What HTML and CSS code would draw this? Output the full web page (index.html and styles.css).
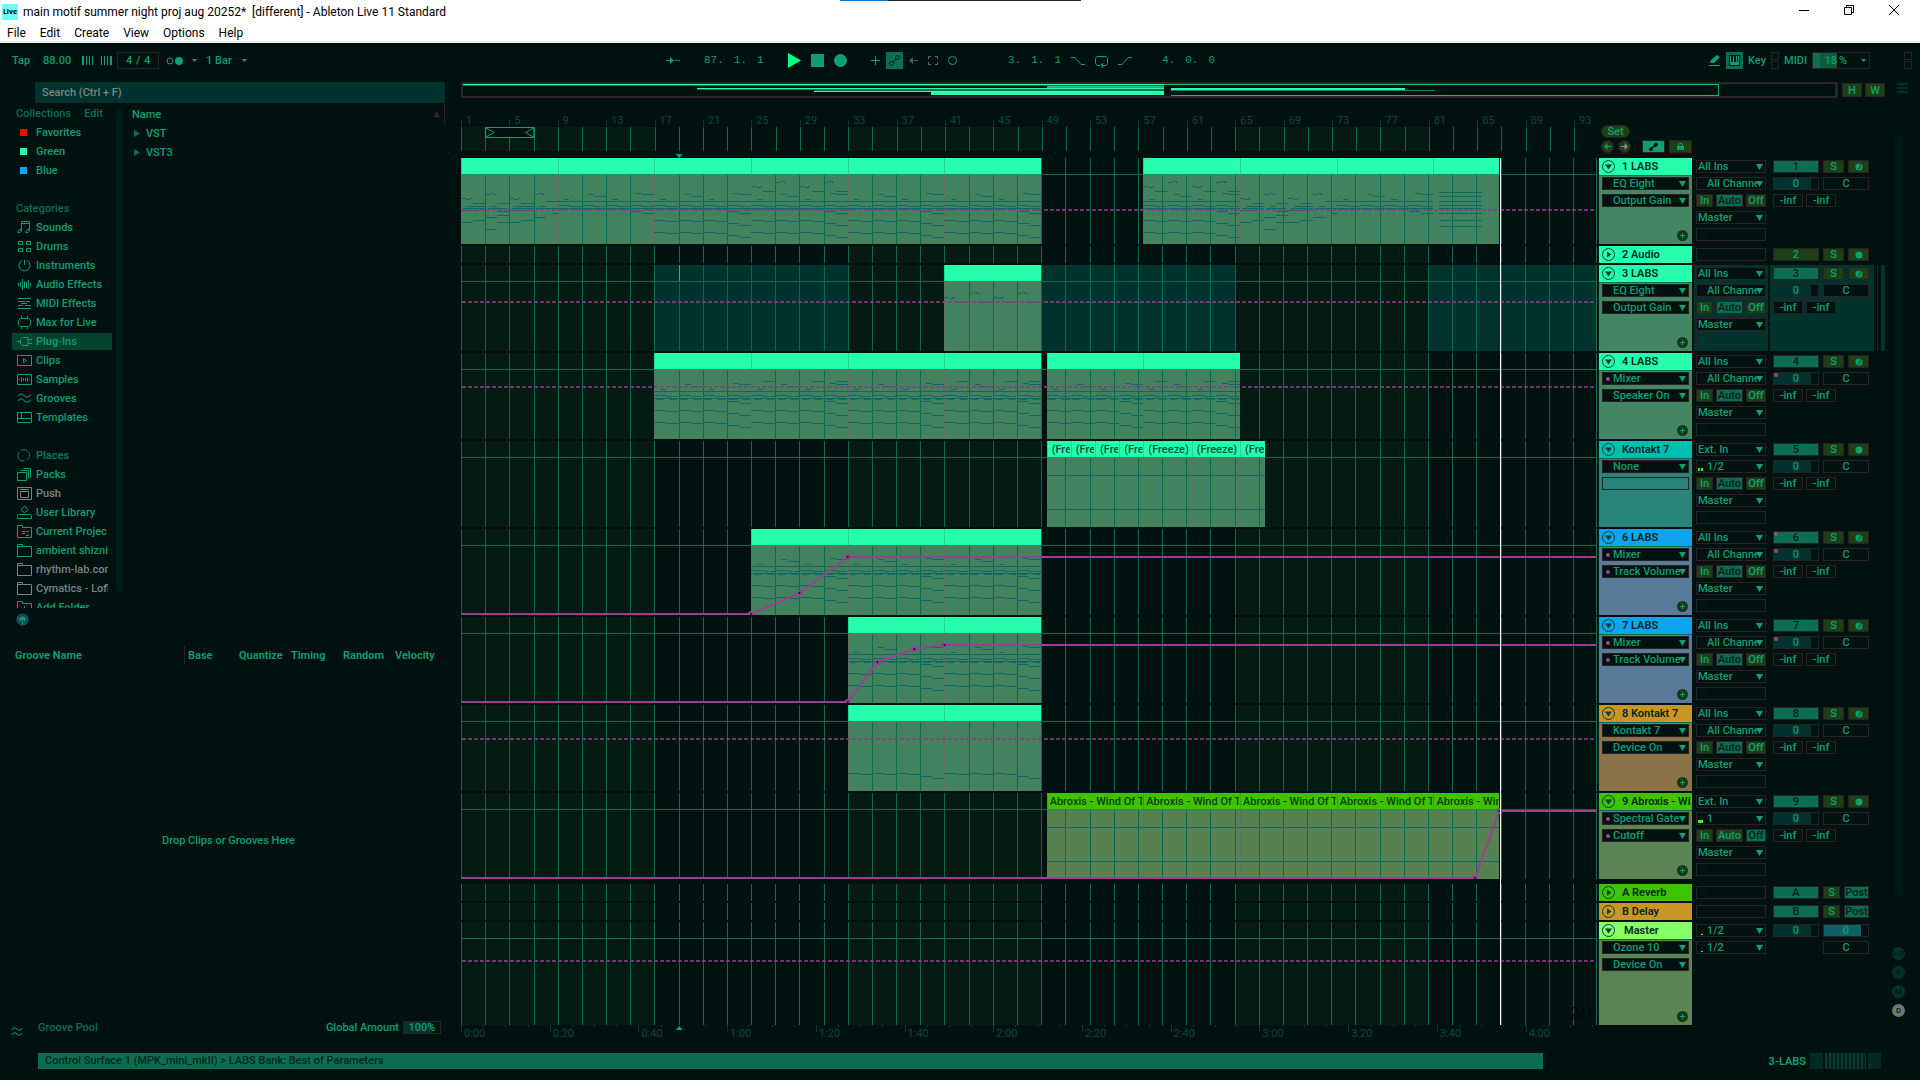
FILE: index.html
```html
<!DOCTYPE html>
<html lang="en">
<head>
<meta charset="utf-8">
<title>main motif summer night proj aug 20252* [different] - Ableton Live 11 Standard</title>
<link rel="stylesheet" href="styles.css">
</head>
<body>
<header class="window-head">
  <div class="title-row">
    <span class="live-logo">Live</span>
    <h1 class="window-title">main motif summer night proj aug 20252*&nbsp; [different] - Ableton Live 11 Standard</h1>
    <div class="window-buttons">
      <button aria-label="Minimize"><svg width="10" height="10"><path d="M0 5.500h10"/></svg></button>
      <button aria-label="Restore"><svg width="10" height="10"><path d="M.5 2.500h7v7h-7zM2.500 2.500v-2h7v7h-2"/></svg></button>
      <button aria-label="Close"><svg width="10" height="10"><path d="M0 0l10 10M10 0L0 10"/></svg></button>
    </div>
  </div>
  <nav class="menu-row">
    <button>File</button><button>Edit</button><button>Create</button><button>View</button><button>Options</button><button>Help</button>
  </nav>
</header>

<main class="app">
  <section class="toolbar" aria-label="Transport">
    <div class="tool-group tempo">
      <button class="plain tap">Tap</button>
      <span class="bpm">88.00</span>
      <svg class="nudge" width="11" height="9"><path d="M0 0h2v9H0zM4 0h1v9H4zM7 0h1v9H7zM10 0h1v9h-1z"/></svg>
      <svg class="nudge" width="11" height="9"><path d="M0 0h1v9H0zM3 0h1v9H3zM6 0h1v9H6zM9 0h2v9H9z"/></svg>
      <span class="signature">4 / 4</span>
      <button class="plain metro" aria-label="Metronome"><svg width="17" height="8"><circle cx="4" cy="4" r="3" fill="none" stroke="#109f71"/><circle cx="13" cy="4" r="4"/></svg></button>
      <i class="caret"></i>
      <span class="quant">1 Bar</span>
      <i class="caret"></i>
    </div>
    <div class="tool-group transport">
      <svg width="14" height="9"><path d="M0 4h4V1l4 3.500L4 8V5H0zM9 4h2v1H9zM12 4h2v1h-2z"/></svg>
      <span class="position"><b>87.</b><b>1.</b><b>1</b></span>
      <button class="plain" aria-label="Play"><svg width="13" height="15"><path fill="#00ff88" d="M0 0l13 7.500L0 15z"/></svg></button>
      <button class="plain" aria-label="Stop"><svg width="13" height="13"><path d="M0 0h13v13H0z"/></svg></button>
      <button class="plain rec" aria-label="Record"><svg width="13" height="13"><circle cx="6.500" cy="6.500" r="6.500"/></svg></button>
      <button class="plain" aria-label="Overdub"><svg width="9" height="9"><path d="M4 0h1v9H4zM0 4h9v1H0z"/></svg></button>
      <button class="plain auto-arm" aria-label="Automation arm"><svg width="17" height="17"><rect width="17" height="17" fill="#0c6e50"/><g fill="none" stroke="#01221a"><circle cx="5.500" cy="11.500" r="2"/><circle cx="11.500" cy="5.500" r="2"/><path d="M7 10l3-3"/></g></svg></button>
      <button class="plain" aria-label="Re-enable automation"><svg width="9" height="7"><path fill="#5b5353" d="M0 3.500L4 0v3h5v1H4v3z"/></svg></button>
      <button class="plain" aria-label="Capture"><svg width="10" height="9"><path fill="none" stroke="#6f6565" d="M.5 3V.5H3M7 .5h2.500V3M9.500 6v2.500H7M3 8.500H.5V6"/></svg></button>
      <button class="plain session-rec" aria-label="Session record"><svg width="9" height="9"><circle cx="4.500" cy="4.500" r="4" fill="none" stroke="#109f71"/></svg></button>
      <span class="position"><b>3.</b><b>1.</b><b>1</b></span>
      <svg class="line-icon" width="14" height="8"><path d="M0 .5h4l6 7h4"/></svg>
      <svg class="line-icon loop" width="13" height="12"><path d="M5 9.500H2l-1.500-2v-5L2 .5h9l1.500 2v5l-1.500 2H8M7.500 7v4.500M8 7L6 9.500 8 11.500"/></svg>
      <svg class="line-icon" width="14" height="8"><path d="M0 7.500h4l6-7h4"/></svg>
      <span class="position last"><b>4.</b><b>0.</b><b>0</b></span>
    </div>
    <div class="tool-group status">
      <svg width="12" height="11"><path d="M0 10h11v1H0zM1 8l1-3 6-5 3 2-6 6z"/></svg>
      <svg width="17" height="17"><rect width="17" height="17" fill="#0c6e50"/><path fill="#01130f" d="M3 3h11v11H3z"/><path fill="#109f71" d="M4 4h1v9H4zM12 4h1v9h-1zM5 10h7v3H5zM7 4h1v6H7zM10 4h1v6h-1z"/></svg>
      <span class="key">Key</span>
      <span class="lamps"><i></i><i></i></span>
      <span>MIDI</span>
      <span class="cpu"><b>18</b>%<i class="caret"></i></span>
      <span class="lamps end"><i></i><i></i></span>
    </div>
  </section>

  <div class="workspace">
    <aside class="left">
      <div class="browser">
        <input class="search" type="search" placeholder="Search (Ctrl + F)" aria-label="Search">
        <div class="browser-cols">
          <ul class="side-list" id="side-list"></ul>
          <div class="side-scroll"></div>
          <div class="files">
            <div class="files-head"><span>Name</span><i class="sort"></i></div>
            <div class="file"><i></i>VST</div>
            <div class="file"><i></i>VST3</div>
          </div>
        </div>
        <button class="plain preview" aria-label="Preview"><svg width="13" height="13"><circle cx="6.500" cy="6.500" r="5.500" fill="#0b4a4c" stroke="#14696b"/><path d="M3 7a3.500 3.500 0 0 1 7 0l-2 2V7H7v4H6V7H5v2z" fill="#1a8d86"/></svg></button>
      </div>
      <div class="groove">
        <div class="groove-head"><span>Groove Name</span><span>Base</span><span>Quantize</span><span>Timing</span><span>Random</span><span>Velocity</span></div>
        <p class="drop-hint">Drop Clips or Grooves Here</p>
        <div class="groove-foot">
          <svg class="line-icon" width="12" height="9"><path d="M.5 3l2-2h2l3 2h2l2-2M.5 8l2-2h2l3 2h2l2-2"/></svg>
          <span class="pool">Groove Pool</span><span>Global Amount</span><span class="amount">100%</span>
        </div>
      </div>
    </aside>

    <section class="arrange">
      <div class="overview-row">
        <svg class="overview" id="overview"></svg>
        <button class="btn hw">H</button><button class="btn hw">W</button>
        <svg class="burger" width="11" height="11"><path d="M0 0h11v2H0zM0 4h11v2H0zM0 8h11v2H0z"/></svg>
      </div>
      <div class="arrange-body">
        <div class="lanes">
          <svg class="ruler" id="ruler"></svg>
          <div class="lane-stack" id="lanes"><span class="playhead"></span><span class="grid-size">2/1</span></div>
          <svg class="time-ruler" id="time-ruler"></svg>
        </div>
        <div class="strips">
          <div class="set-box">
            <button class="btn set">Set</button>
            <div class="set-row">
              <button class="round" aria-label="Previous locator"><svg width="7" height="7"><path d="M0 3.500L3.500 0v3H7v1H3.500v3z" fill="#109f71"/></svg></button>
              <button class="round" aria-label="Next locator"><svg width="7" height="7"><path d="M7 3.500L3.500 0v3H0v1h3.500v3z" fill="#8c8c84"/></svg></button>
              <button class="btn wide on" aria-label="Automation mode"><svg width="9" height="8"><path d="M0 6l2-2h1l2-2V1l1-1h2l1 1v1L7 4H5L4 5v1L3 8H1L0 7z" fill="#01130f"/></svg></button>
              <button class="btn wide" aria-label="Lock envelopes"><svg width="7" height="7"><path d="M0 3h7v4H0z" fill="#109f71"/><path d="M1.500 3V2l1-1.500h2l1 1.500v1" fill="none" stroke="#109f71"/></svg></button>
            </div>
          </div>
          <div id="strips" class="strip-stack"></div>
        </div>
        <div class="rail">
          <div class="rail-scroll"></div>
          <div class="rail-buttons"><button>I-O</button><button>R</button><button>M</button><button class="lit">D</button></div>
        </div>
      </div>
    </section>
  </div>

  <footer class="status-row">
    <p class="status-text">Control Surface 1 (MPK_mini_mkII) &gt; LABS Bank: Best of Parameters</p>
    <span class="device-name">3-LABS</span>
    <span class="device small"></span><span class="device"></span><span class="device small"></span>
  </footer>
</main>
<div class="taskbar"><i></i><i></i></div>
<script src="app.js"></script>
</body>
</html>
```
FILE: styles.css
```css
:root {
  --bg: #001210;
  --band: #051a12;
  --select: #00322e;
  --green: #109f71;
  --mid: #0c6e50;
  --line: #0a6b4f;
  --frame: #282222;
  --olive: #1e4016;
}
* { box-sizing: border-box; }
body {
  margin: 0;
  min-height: 100vh;
  display: flex;
  flex-direction: column;
  background: var(--bg);
  color: var(--green);
  font: 500 11px/13px Roboto, "Liberation Sans", sans-serif;
  overflow: hidden;
}
button, input, select { font: inherit; color: inherit; margin: 0; padding: 0; border: 0; background: none; border-radius: 0; }
svg { display: block; flex: none; fill: var(--green); }
svg svg { fill: inherit; }
b { font-weight: inherit; }
i { font-style: normal; }
.plain { display: flex; align-items: center; }

/* window frame */
.window-head { position: relative; background: #fff; color: #000; border-bottom: 2px solid #edf0ee; font: 400 12px/16px Roboto, "Noto Sans", sans-serif; }
.window-head::before { content: ""; position: absolute; top: 0; left: 840px; width: 241px; height: 1px; background: linear-gradient(90deg, #0078d7 48px, #222 48px); }
.title-row { display: flex; align-items: center; height: 24px; padding-left: 2px; }
.live-logo { width: 16px; height: 16px; background: #71fff4; font: 700 7px/16px "Open Sans", sans-serif; text-align: center; }
.window-title { margin: 0 0 0 5px; font: inherit; }
.window-buttons { margin-left: auto; display: flex; gap: 35px; padding: 0 21px 4px 0; }
.window-buttons svg { fill: none; stroke: #000; }
.menu-row { display: flex; gap: 14px; height: 17px; padding-left: 7px; }

.app { flex: 1; display: flex; flex-direction: column; }

/* transport bar */
.toolbar { display: grid; grid-template-columns: 666px 1fr 216px; height: 35px; }
.tool-group { display: flex; align-items: center; }
.tempo { padding-left: 12px; }
.bpm { margin: 0 12px 0 13px; width: 27px; }
.nudge { margin-right: 8px; }
.signature { margin: 0 10px 0 -3px; width: 42px; height: 17px; border: 1px solid var(--frame); line-height: 15px; text-align: center; word-spacing: 1px; }
.caret { width: 5px; height: 3px; background: var(--green); clip-path: polygon(0 0, 100% 0, 50% 100%); }
.metro { margin-left: -3px; margin-right: 9px; }
.quant { margin: 0 10px 0 9px; }
.transport { gap: 10px; }
.position { display: flex; gap: 10px; width: 61px; margin-left: 14px; margin-right: 13px; font: 400 11px/13px "Liberation Mono", monospace; }
.rec { margin-right: 14px; }
.auto-arm { margin: 0 -4px; }
.session-rec { margin-right: 41px; }
.session-rec ~ .position:not(.last) { margin: 0; width: 53px; }
.position.last { margin-left: 20px; }
.line-icon { fill: none; stroke: var(--green); }
.loop { margin-top: 3px; }
.status { gap: 5px; padding-left: 5px; }
.lamps { display: grid; gap: 1px; }
.lamps i { width: 8px; height: 8px; border: 1px solid var(--frame); }
.cpu { display: flex; align-items: center; width: 58px; height: 17px; border: 1px solid var(--frame); gap: 2px; }
.cpu b { width: 24px; line-height: 15px; text-align: right; background: linear-gradient(90deg, #0c6e50 7px, #0a5b3c 7px); }
.cpu .caret { margin-left: auto; margin-right: 3px; }
.lamps.end { margin-left: auto; margin-right: 8px; }

.workspace { flex: 1; display: grid; grid-template-columns: 461px minmax(0, 1fr); }

/* browser */
.left { display: flex; flex-direction: column; padding-top: 4px; }
.browser { display: flex; flex-direction: column; height: 557px; }
.search { flex: none; width: 410px; height: 21px; margin-left: 35px; padding-left: 7px; background: var(--select); outline: 0; }
.search::placeholder { color: #758780; opacity: 1; }
.browser-cols { display: grid; grid-template-columns: 116px 7px 1fr; height: 504px; margin-top: 1px; }
.side-list { margin: 0; padding: 0 0 0 12px; list-style: none; overflow: hidden; }
.side-list li { display: flex; align-items: center; gap: 4px; width: 100px; height: 19px; padding-left: 5px; white-space: nowrap; overflow: hidden; border-bottom: 1px solid var(--bg); border-top: 1px solid var(--bg); }
.side-list span { width: 72px; overflow: hidden; line-height: 17px; }
.side-list svg { width: 15px; height: 13px; fill: none; stroke: currentColor; }
.side-list .head { color: var(--mid); padding-left: 4px; }
.side-list .head span { flex: none; width: auto; margin-right: 9px; }
.side-list .head span:last-child { margin: 0; }
.side-list .picked { background: #06432f; }
.side-list .grey { color: #7d8480; }
.side-list .dim { color: #0c7d5b; }
.swatch { width: 7px; height: 7px; margin: 0 5px 0 3px; }
.side-scroll { margin: 5px 0 16px; border-radius: 4px; background: #001a16; }
.files { padding-left: 9px; }
.files-head { display: flex; align-items: center; width: 313px; height: 20px; padding-right: 4px; border-right: 1px solid var(--frame); }
.sort { margin-left: auto; width: 7px; height: 7px; background: #2b2727; clip-path: polygon(50% 0, 100% 100%, 0 100%); }
.file { display: flex; align-items: center; gap: 6px; height: 19px; padding-left: 2px; }
.file i { width: 6px; height: 7px; background: var(--mid); clip-path: polygon(0 0, 100% 50%, 0 100%); }
.preview { margin: 5px 0 0 16px; }

/* groove pool */
.groove { flex: 1; display: flex; flex-direction: column; }
.groove-head { display: grid; grid-template-columns: 169px 52px 52px 52px 52px 1fr; height: 20px; padding-left: 15px; margin-top: 6px; align-items: center; font-weight: 600; }
.groove-head span:nth-child(n+2) { padding-left: 3px; line-height: 19px; }
.groove-head span:nth-child(2) { border-left: 1px solid var(--frame); }
.drop-hint { flex: 1; display: grid; place-items: center; margin: 0; padding: 0 4px 2px 0; }
.groove-foot { display: flex; align-items: center; height: 19px; padding-left: 11px; margin-bottom: 6px; }
.groove-foot svg { margin-top: 8px; }
.pool { margin: 0 auto 0 15px; color: var(--mid); }
.amount { width: 38px; height: 13px; margin: 0 20px 0 4px; border: 1px solid var(--frame); background: linear-gradient(90deg, var(--select) 28px, transparent 28px); line-height: 11px; text-align: center; }

/* arrangement */
.arrange { display: flex; flex-direction: column; padding-top: 4px; }
.overview-row { display: flex; align-items: center; height: 16px; }
.overview { flex: 1; height: 16px; border: 2px solid #2b2525; border-right-width: 3px; }
.btn { display: grid; place-items: center; border: 1px solid var(--frame); background: var(--olive); line-height: 11px; white-space: nowrap; overflow: hidden; }
.hw { width: 20px; height: 14px; margin-left: 4px; }
.hw + .hw { margin-left: 3px; }
.burger { margin: -4px 12px 0 12px; fill: #00302c; }
.arrange-body { flex: 1; display: grid; grid-template-columns: minmax(0, 1fr) 286px 33px; gap: 0 2px; padding-top: 6px; }
.lanes { display: flex; flex-direction: column; }
.ruler { width: 100%; height: 54px; font-size: 11px; font-weight: 400; }
.lane-stack, .strip-stack { display: flex; flex-direction: column; gap: 2px; }
.lane-stack { position: relative; }
.lane { width: 100%; height: 86px; border-right: 1px solid var(--line); background: var(--bg); }
.short { height: 17px; }
.tall { height: 103px; }
.first-return { margin-top: 3px; }
.playhead { position: absolute; z-index: 2; top: 0; bottom: 0; left: 91.5%; width: 1px; background: #fff; }
.grid-size { position: absolute; z-index: 1; right: 3px; bottom: 1px; color: #000806; font: 400 16px/20px Roboto, sans-serif; }
.time-ruler { width: 100%; height: 18px; fill: #0b4533; font-weight: 400; }

.set-box { height: 54px; padding: 21px 0 0 2px; }
.set { width: 29px; height: 13px; border-radius: 7px; }
.set-row { display: flex; align-items: center; margin-top: 2px; }
.round { display: grid; place-items: center; width: 13px; height: 13px; margin-right: 4px; border: 1px solid var(--frame); border-radius: 50%; background: var(--olive); }
.wide { width: 23px; height: 13px; margin-left: 4px; }
.round + .wide { margin-left: 7px; }
.set-row .on { background: var(--green); }

.strip { display: grid; grid-template-columns: 93px 74px 115px; gap: 2px; height: 86px; }
.strip.short { height: 17px; }
.strip.tall { height: 103px; }
.name-col { background: var(--body); position: relative; }
.name { display: flex; align-items: center; gap: 7px; height: 17px; padding-left: 3px; background: var(--head); color: #01281d; font-weight: 600; white-space: nowrap; overflow: hidden; }
.strip:not(.short) .name { height: 18px; border-bottom: 1px solid var(--mid); }
.name svg { fill: #033f33; }
.strip.center .name { gap: 9px; }
.dd { position: relative; display: block; height: 13px; border: 1px solid var(--frame); background: var(--bg); }
.dd select { display: block; width: 100%; height: 11px; padding: 0 8px 0 1px; appearance: none; line-height: 11px; outline: 0; }
.dd.in select { padding-left: 10px; }
.dd::after { content: ""; position: absolute; right: 2px; top: 3px; width: 7px; height: 6px; background: var(--green); clip-path: polygon(0 0, 100% 0, 50% 100%); }
.dd.auto::before, .dot::before { content: ""; position: absolute; left: 3px; top: 4px; width: 4px; height: 4px; border-radius: 50%; background: #9d4798; }
.dd.blank { background: none; }
.dd.blank::after { display: none; }
.dd.meter::before { content: ""; position: absolute; left: 1px; bottom: 1px; width: 5px; height: 3px; background: #2dff2d; }
.dd.stereo::before { background: linear-gradient(90deg, #2dff2d 2px, transparent 2px 3px, #2dff2d 3px); }
.dd.quiet::before { left: 4px; width: 2px; height: 1px; }
.devices { display: grid; gap: 4px; padding: 1px 3px 0; }
.add { position: absolute; right: 4px; bottom: 3px; display: grid; place-items: center; width: 11px; height: 11px; border-radius: 50%; background: #193817; }
.io-col { display: grid; grid-template-columns: 17px 27px 20px; grid-auto-rows: 13px; gap: 4px 3px; align-content: start; padding: 2px 0 0 2px; }
.io-col .dd { grid-column: 1 / 4; }
.on { background: var(--mid); color: #01221a; }
.mix-col { display: flex; flex-wrap: wrap; align-content: flex-start; gap: 4px; padding: 2px 15px 0 3px; }
.mix-col > * { height: 13px; }
.num { position: relative; width: 46px; }
.s, .arm { width: 21px; }
.return .s { width: 17px; }
.post { width: 25px; }
.field { position: relative; display: grid; place-items: center; width: 46px; border: 1px solid var(--frame); background: var(--bg); line-height: 11px; }
.vol { background: linear-gradient(90deg, var(--select) 37px, var(--bg) 37px); }
.vol.cue { background: linear-gradient(90deg, #0d6265 37px, var(--bg) 37px); }
.pan-only { margin-left: 50px; }
.peak { width: 30px; margin-right: -1px; }
.dot::before { left: 0; top: 0; }
.selected .io-col { background: var(--select); }
.selected .mix-col { background: linear-gradient(90deg, transparent 104px, #001210 104px 107px, transparent 107px 108px, #001210 108px 111px, transparent 111px) var(--select); }

.rail { display: flex; flex-direction: column; justify-content: space-between; padding: 31px 0 26px 7px; }
.rail-scroll { width: 7px; height: 762px; margin-left: 1px; border-radius: 4px; background: #001a16; }
.rail-buttons { display: grid; gap: 6px; margin-left: -2px; }
.rail-buttons button { width: 13px; height: 13px; border-radius: 50%; background: #00332e; color: #001210; font-size: 8px; line-height: 13px; }
.rail-buttons .lit { background: #6c7a76; }

.status-row { display: flex; align-items: center; height: 38px; padding: 3px 37px 5px 38px; }
.status-text { flex: 0 1 1505px; height: 16px; margin: 0; padding-left: 7px; background: var(--mid); color: #01261c; line-height: 16px; }
.device-name { margin-left: auto; margin-right: 4px; font-weight: 600; white-space: nowrap; }
.device { flex: none; width: 41px; height: 16px; margin-right: 2px; background: repeating-linear-gradient(90deg, #0c3a33 0 2px, #00201b 2px 4px); }
.device.small { width: 13px; background: #002a26; }
.taskbar { display: flex; height: 2px; background: #202222; padding-left: 48px; gap: 248px; }
.taskbar i { width: 288px; background: #5c5f5f; }
.taskbar i + i { width: 48px; }
```
FILE: app.js
```js
const BARS = 93.9;
const pct = bar => ((bar - 1) / BARS * 100).toFixed(3) + '%';
const span = bars => (bars / BARS * 100).toFixed(3) + '%';
const rect = (bar, y, bars, h, fill) =>
  `<rect x="${pct(bar)}" y="${y}" width="${typeof bars === 'string' ? bars : span(bars)}" height="${h}" fill="${fill}" shape-rendering="crispEdges"/>`;

/* browser list */
const icons = {
  note: 'M4.500 10.500V.5h8v9M4.500 2.500h8M1 9.500l1-1h2v2l-1 1H1zM9 9.500l1-1h2v2l-1 1H9z',
  pads: 'M1.500 1.500h4v3h-4zM9.500 1.500h4v3h-4zM1.500 8.500h4v3h-4zM9.500 8.500h4v3h-4z',
  dial: 'M7.500 1v5M5 1.500a5.500 5.500 0 1 0 5 0',
  wave: 'M1.500 5v3M3.500 4v5M5.500 1v11M7.500 3v7M9.500 4v6M11.500 2v9M13.500 5v3',
  midi: 'M1 1.500h13M1 4.500h7M9 4.500h4M4 6.500h6M1 8.500h5M8 8.500h6M1 11.500h13',
  max: 'M3.500 2.500h8l2 2v4l-2 2h-8l-2-2v-4zM4.500 0v2M10.500 0v2M4.500 11v2M10.500 11v2',
  plug: 'M0 6.500h3.500M3.500 4.500l2-2h5.500v8H5.500l-2-2zM11 4.500h4M11 8.500h4',
  clip: 'M.5 1.500h14v10H.5zM6.500 4.500v4l3-2z',
  sample: 'M.5 1.500h14v10H.5zM2 6.500h1M4.500 4v5M6.500 5v3M8.500 5v3M10.500 4v5M12 6.500h1',
  groove: 'M1 4l2-2h2l4 3h2l3-2M1 9l2-2h2l4 3h2l3-2',
  template: 'M.5 1.500h14v10H.5zM.5 7.500h14M4.500 1.500v6',
  ring: 'M4 1.500A5.300 5.300 0 0 1 10 11M7.500 11.800A5.300 5.300 0 0 1 2.500 2.800',
  packs: 'M.5 4.500h9v8h-9zM3.500 2.500h8v8M6.500.5h7v9',
  push: 'M.5.5h14v12H.5zM3 2.500h9M3.500 4.500h8v6h-8z',
  user: 'M4.500 3.500l1-2 2-1 2 1 1 2-1 2-2 1-2-1zM.5 12.500v-3l1-1h12l1 1v3z',
  project: 'M.5 12.500V.5h5v2h9v10zM5 6.500h3M9 6.500h3M5 8.500h3M9 10.500h3',
  folder: 'M.5 12.500V.5h5v2h9v10zM.5 2.500h5',
  add: 'M.5 12.500V.5h5v2h9v10zM7.500 5v5M5 7.500h5'
};
const entries = [
  ['head', '', 'Collections', 'Edit'], ['', '#ff0000', 'Favorites'], ['', '#26ffae', 'Green'], ['', '#10a4ee', 'Blue'], ['', '', ''],
  ['head', '', 'Categories'],
  ['', 'note', 'Sounds'], ['', 'pads', 'Drums'], ['', 'dial', 'Instruments'], ['', 'wave', 'Audio Effects'], ['', 'midi', 'MIDI Effects'],
  ['', 'max', 'Max for Live'], ['picked', 'plug', 'Plug-Ins'], ['', 'clip', 'Clips'], ['', 'sample', 'Samples'], ['', 'groove', 'Grooves'],
  ['', 'template', 'Templates'], ['', '', ''],
  ['dim', 'ring', 'Places'], ['', 'packs', 'Packs'], ['grey', 'push', 'Push'], ['', 'user', 'User Library'], ['', 'project', 'Current Projec'],
  ['', 'folder', 'ambient shiznit'], ['grey', 'folder', 'rhythm-lab.com'], ['grey', 'folder', 'Cymatics - Lofi'], ['', 'add', 'Add Folder...']
];
document.getElementById('side-list').innerHTML = entries.map(([cls, icon, text, extra]) => {
  const mark = !icon ? '' : icon[0] === '#' ? `<i class="swatch" style="background:${icon}"></i>` : `<svg><path d="${icons[icon]}"/></svg>`;
  return `<li class="${cls}">${mark}<span>${text}</span>${extra ? `<span>${extra}</span>` : ''}</li>`;
}).join('');

/* note patterns: [bar offset, row, length] over eight bars */
const steps = y => [[0, y, 1], [1, y + 1, 1], [2, y, 1], [3, y + 1, 1], [4, y, 1], [5, y + 1, 1], [6, y + 3, 1], [7, y + 5, 1]];
const low = steps(74);
const bass = [...steps(62), ...low];
const core = [[0, 43, 8], [.5, 41, .45], [2.5, 36, .5], [3, 38, 1], [4.5, 41, .45], [6.5, 35, .5], [7, 36, 1], [6, 53, 1], [7, 55, 1]];
for (let i = 0; i < 8; i += 2) core.push([i, 47, 1], [i + 1, 48, .5], [i + 1.55, 48, .4], [i, 50, 2], [i + .2, 51, .6], [i + 1.3, 51, .6]);
/* a short three-note turn: down from or up to its neighbour row */
const turn = (x, y, d) => [[x, y, .4], [x + .45, y + d, .3], [x + .7, y, .2]];
const high = [...turn(0, 28, 1), ...turn(2, 24, -1), ...turn(4, 28, 1), ...turn(6, 24, -1), [1, 33, 1], [5, 33, 1], [7, 33, 1], [3, 38, 1]];
const intro = [...turn(0, 40, 1), ...turn(2, 36, -1), ...turn(4, 40, 1), ...turn(6, 36, -1), [1, 45, 1], [3, 45, 1], [5, 45, 1], [7, 43, 1],
  [.5, 48, 1.5], [2.5, 48, .5], [4.5, 48, 1.5], [6.5, 48, .5], [.2, 50, 1.8], [2.2, 50, 1.6], [4.2, 50, 1.8], [6.2, 50, 1.8], [0, 52, 1.5], [4, 52, 2],
  [3, 53, 1], [3, 57, 1], [2, 59, 1], [1, 62, 1], [0, 64, 1], [2, 71, 1], [3, 64, 2], [5, 62, 1], [6, 59, 1], [7.5, 55, .5]];
const lead = [...turn(0, 32, 1), ...turn(2, 28, -1), ...turn(4, 32, 1), ...turn(6, 28, -1), [1, 37, .8], [3, 37, .8], [5, 37, .8], [7, 37, .8]];
const stack = [34, 38, 43, 47, 50, 55, 62, 68].map(y => [.5, y, 3.5]);
const full = [...core, ...bass];
const shift = (notes, dy) => notes.map(([x, y, w]) => [x, y + dy, w]);

const MINT = '#26ffae', BODY = '#43825f';
const clip = (from, to, notes, label) => ({ from, to, notes, label });
const tracks = [
  { name: '1 LABS', num: 1, head: MINT, body: '#448563', dev: ['EQ Eight', 'Output Gain'], dash: 51,
    clips: [clip(1, 9, intro), clip(9, 17, core), clip(17, 25, full), clip(25, 33, [...full, ...high]), clip(33, 41, full), clip(41, 49, full),
      clip(57.45, 65.45, [...full, ...high]), clip(65.45, 73.45, intro), clip(73.45, 81.45, core), clip(81.45, 86.9, stack)] },
  { name: '2 Audio', num: 2, head: MINT, short: 1, off: 1, audio: 1 },
  { name: '3 LABS', num: 3, head: MINT, body: '#448563', dev: ['EQ Eight', 'Output Gain'], dash: 36, selected: 1, clips: [clip(41, 49, lead)] },
  { name: '4 LABS', num: 4, head: MINT, body: '#448563', dev: ['*Mixer', 'Speaker On'], dash: 33, dots: [0, 1],
    clips: [17, 25, 33, 41, 49.45, 57.45].map((b, i) => clip(b, b + 8, shift(i % 2 ? [...full, [1, 33, 1], [5, 33, 1], [7, 33, 1]] : full, -5))) },
  { name: 'Kontakt 7', num: 5, head: '#00bfaf', body: '#29857b', dev: ['None', null], ext: 'stereo', audio: 1, noAdd: 1,
    clips: [49.45, 51.45, 53.45, 55.45, 57.45, 61.45, 65.45].map((b, i, a) => clip(b, a[i + 1] || 67.55, [], i === 4 || i === 5 ? '(Freeze)' : '(Fre')), wave: 1 },
  { name: '6 LABS', num: 6, head: '#10a4ee', body: '#5a7a9c', dev: ['*Mixer', '*Track Volume'], dots: [1, 1],
    clips: [25, 33, 41].map(b => clip(b, b + 8, shift(full, -6))), env: [[1, 85], [25, 85], [29, 64], [33, 28], [95, 28]] },
  { name: '7 LABS', num: 7, head: '#10a4ee', body: '#5a7a9c', dev: ['*Mixer', '*Track Volume'], dots: [0, 1],
    clips: [33, 41].map(b => clip(b, b + 8, shift(full, -6))), env: [[1, 85], [33, 85], [35.45, 45], [38.5, 32], [41, 28], [95, 28]] },
  { name: '8 Kontakt 7', num: 8, head: '#c99625', body: '#8b7349', dev: ['Kontakt 7', 'Device On'], dash: 33,
    clips: [33, 41].map(b => clip(b, b + 8, shift(low, -6))) },
  { name: '9 Abroxis - Wi', num: 9, head: '#3fc300', body: '#5a8453', dev: ['*Spectral Gate', '*Cutoff'], ext: 'mono', audio: 1, monitor: 'Off',
    clips: [49.45, 57.45, 65.45, 73.45, 81.45].map((b, i, a) => clip(b, a[i + 1] || 86.9, [], i < 4 ? 'Abroxis - Wind Of T' : 'Abroxis - Win')), wave: 1, tint: ['#3fc300', '#588152', '#0c3f06'],
    env: [[1, 85], [84.9, 85], [86.9, 18], [95, 18]] },
  { name: 'A Reverb', num: 'A', head: '#3fc300', short: 1, ret: 1, gap: 1 },
  { name: 'B Delay', num: 'B', head: '#c99625', short: 1, ret: 1 },
  { name: 'Master', head: '#87ff67', body: '#5a8453', dev: ['Ozone 10', 'Device On'], dash: 38, master: 1 }
];

function grid(y, h) {
  let out = '';
  for (let b = 1; b < BARS + 1; b += 2) out += rect(b, y, '1', h, '#0a6b4f');
  return out;
}
function bands(h, selected) {
  let out = selected ? rect(1, 0, '100%', h, '#00322e') : '';
  for (const b of [1, 33, 65]) out += rect(b, 0, 16, h, '#051a12');
  return out;
}

function lane(t) {
  const h = t.master ? 103 : t.short ? 17 : 86;
  const [head, body, ink] = t.tint || [MINT, BODY, '#06513a'];
  let s = bands(h, t.selected) + grid(0, h);
  if (!t.short) s += rect(1, 16, '100%', 1, '#0a6b4f');
  if (t.selected) s += rect(19, 0, '1', 16, '#3ba98b');
  for (const c of t.clips || []) {
    const w = c.to - c.from;
    s += rect(c.from, 0, w, 17, head) + rect(c.from, 17, w, 69, body) + rect(c.from, 16, w, 1, '#2b8b62');
    for (let b = Math.ceil((c.from - 1) / 2) * 2 + 1; b < c.to; b += 2) s += rect(b, 17, '1', 69, '#0a6b4f');
    s += rect(c.from, 0, '1', 16, t.tint ? '#36a800' : '#1ed795') + rect(c.from, 17, '1', 69, '#62706a');
    for (const [x, y, len] of c.notes) if (x < w) s += rect(c.from + x, y, len, 1, '#106a68');
    if (t.wave) s += rect(c.from, 34, w, 1, '#106a60') + rect(c.from, 68, w, 1, '#106a60');
    if (c.label) s += `<svg x="${pct(c.from)}" y="0" width="${span(w - .08)}" height="16"><text x="${t.tint ? 3 : 5}" y="12" fill="${ink}">${c.label}</text></svg>`;
  }
  if (t.dash) s += `<line x1="1" x2="100%" y1="${t.dash + 1}" y2="${t.dash + 1}" stroke="#8c3c88" stroke-opacity=".8" stroke-width="2" stroke-dasharray="4 2"/>`;
  if (t.env) {
    t.env.forEach(([x, y], i) => {
      const next = t.env[i + 1];
      if (next) s += `<line x1="${pct(x)}" y1="${y}" x2="${pct(next[0])}" y2="${next[1]}" stroke="#9b3f93" stroke-width="2"/>`;
    });
    for (const [x, y] of t.env.slice(1, -1)) s += `<circle cx="${pct(x)}" cy="${y}" r="2" fill="#01221a" stroke="#9b3f93" stroke-width="2"/>`;
  }
  return `<svg class="lane ${t.short ? 'short' : ''} ${t.master ? 'tall' : ''} ${t.gap ? 'first-return' : ''}">${s}</svg>`;
}

const select = (text, cls = '') => `<label class="dd ${cls}"><select aria-label="${text}"><option>${text}</option></select></label>`;
const blank = '<span class="dd blank"></span>';

function strip(t) {
  const arrow = t.short ? 'M5 3.500l4.500 3L5 9.500z' : 'M3 4.500h7L6.500 9.500z';
  const dev = t.dev ? `<div class="devices">${t.dev.map(d => d === null ? blank : select(d.replace('*', ''), 'in' + (d[0] === '*' ? ' auto' : ''))).join('')}</div>` : '';
  const add = t.short || t.noAdd ? '' : '<button class="add" aria-label="Add automation lane"><svg width="5" height="5"><path d="M2 0h1v5H2zM0 2h5v1H0z"/></svg></button>';
  let io, mix;
  const dot = i => t.dots && t.dots[i] ? 'dot' : '';
  if (t.short) {
    io = blank;
  } else if (t.master) {
    io = select('1/2', 'in meter quiet') + select('1/2', 'in meter quiet');
  } else {
    const mon = t.monitor || 'Auto';
    io = select(t.ext ? 'Ext. In' : 'All Ins')
      + (t.ext ? select(t.ext === 'mono' ? '1' : '1/2', 'in meter ' + t.ext) : select('All Channels', 'in'))
      + ['In', 'Auto', 'Off'].map(m => `<button class="btn ${m === mon ? 'on' : ''}">${m}</button>`).join('')
      + select('Master') + blank;
  }
  if (t.master) {
    mix = '<span class="field vol">0</span><span class="field vol cue">0</span><span class="field pan-only">C</span>';
  } else {
    const arm = t.audio ? '<circle cx="4" cy="4" r="3.500"/>' : '<circle cx="4" cy="4" r="3.500"/><path d="M5 1v4L3 6" fill="none" stroke="#1e4016"/>';
    mix = `<button class="btn num ${t.off ? '' : 'on'} ${dot(0)}">${t.num}</button><button class="btn s">S</button>`
      + (t.ret ? '<button class="btn post on">Post</button>' : `<button class="btn arm" aria-label="Arm"><svg width="8" height="8">${arm}</svg></button>`);
    if (!t.short) mix += `<span class="field vol ${dot(1)}">0</span><span class="field">C</span><span class="field peak">-inf</span><span class="field peak">-inf</span>`;
  }
  const cls = ['strip', t.short && 'short', t.master && 'tall center', t.selected && 'selected', t.ret && 'return', t.gap && 'first-return'].filter(Boolean).join(' ');
  return `<div class="${cls}" style="--head:${t.head};--body:${t.body || t.head}">
    <div class="name-col"><div class="name"><svg width="13" height="13"><circle cx="6.500" cy="6.500" r="6" fill="none" stroke="#033f33"/><path d="${arrow}"/></svg>${t.name}</div>${dev}${add}</div>
    <div class="io-col">${io}</div><div class="mix-col">${mix}</div></div>`;
}
document.getElementById('lanes').insertAdjacentHTML('afterbegin', tracks.map(lane).join(''));
document.getElementById('strips').innerHTML = tracks.map(strip).join('');

/* rulers */
let r = '';
for (const b of [1, 33, 65]) r += rect(b, 23, 16, 24, '#051a12');
r += grid(23, 24);
for (let b = 1; b <= 93; b += 4) {
  r += rect(b, 16, '1', 6, '#0a3a2c');
  r += `<svg x="${pct(b)}" overflow="visible"><text x="5" y="20" fill="#0b4533">${b}</text></svg>`;
}
r += rect(3, 23, 4, 11, '#109f71');
r += `<svg x="${pct(3)}" y="24" width="${span(4)}" height="9"><rect x="1" width="100%" height="9" fill="#001210"/><path d="M1 0l8 4.500L1 9" fill="none" stroke="#109f71"/></svg>`;
r += `<svg x="${pct(7)}" y="23" overflow="visible"><path d="M0 1l-8 4.500L0 10M.5 0v11" fill="none" stroke="#109f71"/></svg>`;
r += `<svg x="${pct(19)}" y="50" overflow="visible"><path d="M-3 0h7L.5 4z"/></svg>`;
document.getElementById('ruler').innerHTML = r;

let tm = '';
for (let i = 0; i <= 51; i++) {
  const bar = 1 + i * 5 * 88 / 240;
  tm += rect(bar, 0, '1', i % 4 ? 2 : 7, '#0a3a2c');
  if (i % 4 === 0) {
    const sec = i * 5;
    tm += `<svg x="${pct(bar)}" overflow="visible"><text x="3" y="12">${Math.floor(sec / 60)}:${String(sec % 60).padStart(2, '0')}</text></svg>`;
  }
}
tm += `<svg x="${pct(19)}" y="1" overflow="visible"><path d="M-3 4h7L.5 0z" fill="#109f71"/></svg>`;
document.getElementById('time-ruler').innerHTML = tm;

const ov = (a, b, y, h, c) => rect(a, y, b - a, h, c);
document.getElementById('overview').innerHTML =
  ov(1, 49, 0, 1, MINT) + ov(1, 49, 1, 1, '#0c6e50') + ov(17, 49, 4, 1, MINT) + ov(17, 49, 5, 1, '#0c6e50')
  + ov(25, 49, 6, 1, '#0c6e50') + ov(25, 33, 7, 1, MINT) + ov(33, 49, 7, 4, MINT) + ov(41, 49, 2, 2, '#17b87f')
  + ov(49.45, 65.45, 4, 2, MINT) + ov(49.45, 67.5, 6, 1, '#0c8a5c') + ov(57.45, 86.9, 0, 1, MINT)
  + ov(49.45, 86.9, 11, 1, '#46b400') + ov(49, 86.9, 0, 1, '#12c283') + rect(86.9, 0, '1', 12, '#12a374');
```
